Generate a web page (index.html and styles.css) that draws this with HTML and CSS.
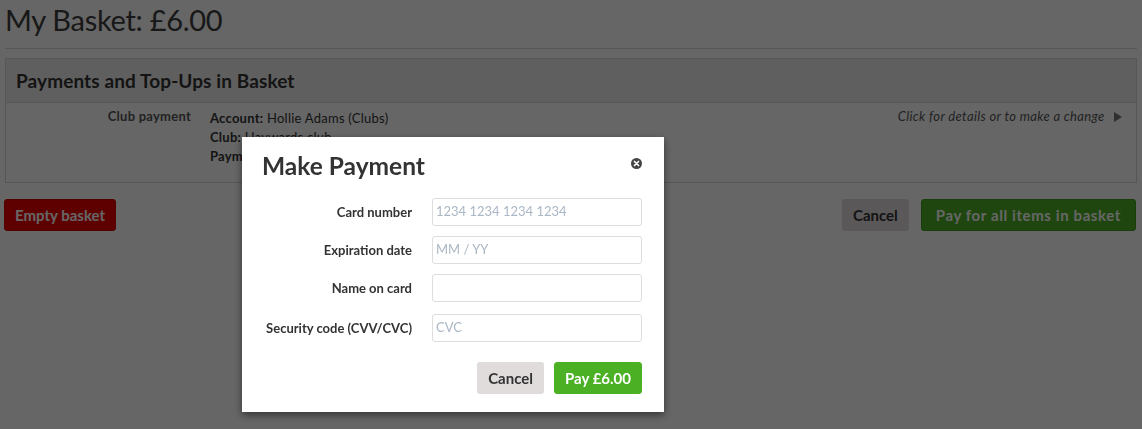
FILE: index.html
```html
<!DOCTYPE html>
<html>
<head>
<meta charset="utf-8">
<link rel="stylesheet" href="styles.css">
</head>
<body>
<div class="page">
  <h1 class="title">My Basket: £6.00</h1>
  <div class="rule"></div>
  <div class="panel">
    <div class="panel-head">Payments and Top-Ups in Basket</div>
    <div class="panel-body">
      <div class="item-label">Club payment</div>
      <div class="item-details">
        <div><b>Account:</b> Hollie Adams (Clubs)</div>
        <div><b>Club:</b> Haywards club</div>
        <div><b>Payment:</b> £6.00</div>
      </div>
      <div class="item-link">Click for details or to make a change <span class="tri"></span></div>
    </div>
  </div>
  <div class="actions">
    <button class="btn btn-red">Empty basket</button>
    <div class="actions-right">
      <button class="btn btn-grey">Cancel</button>
      <button class="btn btn-green btn-wide">Pay for all items in basket</button>
    </div>
  </div>
</div>
<div class="overlay"></div>
<div class="modal">
  <div class="modal-head">
    <h2 class="modal-title">Make Payment</h2>
    <span class="close"><svg width="11" height="11" viewBox="0 0 12 12"><circle cx="6" cy="6" r="6" fill="#444"/><path d="M3.8 3.8L8.2 8.2M8.2 3.8L3.8 8.2" stroke="#fff" stroke-width="1.8" stroke-linecap="round"/></svg></span>
  </div>
  <div class="form">
    <label class="lbl">Card number</label>
    <div class="field ph">1234 1234 1234 1234</div>
    <label class="lbl">Expiration date</label>
    <div class="field ph">MM / YY</div>
    <label class="lbl">Name on card</label>
    <div class="field"></div>
    <label class="lbl lbl-last">Security code (CVV/CVC)</label>
    <div class="field field-last ph">CVC</div>
  </div>
  <div class="modal-foot">
    <button class="btn btn-grey">Cancel</button>
    <button class="btn btn-green">Pay £6.00</button>
  </div>
</div>
</body>
</html>
```
FILE: styles.css
```css
html, body { margin: 0; padding: 0; }
body {
  font-family: Lato, "Open Sans", sans-serif;
  background: #fff;
  color: #444;
  width: 1142px;
  height: 429px;
  overflow: hidden;
}
.page { padding: 0 5px; }
.title {
  margin: 0;
  padding-top: 2px;
  font-size: 29px;
  font-weight: 400;
  line-height: 36px;
  color: #3c3c3c;
  letter-spacing: -0.3px;
}
.rule { height: 1px; background: #d8d8d8; margin-top: 10px; }
.panel {
  margin-top: 9px;
  border: 1px solid #d8d8d8;
}
.panel-head {
  background: #eee;
  border-bottom: 1px solid #ddd;
  height: 43px;
  line-height: 43px;
  padding-left: 10px;
  font-size: 19px;
  font-weight: 700;
  color: #333;
  letter-spacing: 0.1px;
}
.panel-body {
  display: flex;
  padding: 6px 14px 0 0;
  height: 73px;
  font-size: 13px;
  line-height: 19px;
  color: #333;
  letter-spacing: 0.25px;
}
.item-label {
  width: 185px;
  text-align: right;
  font-weight: 700;
  color: #555;
  margin-top: -2px;
}
.item-details { margin-left: 19px; flex: 1; }
.item-link {
  font-style: italic;
  color: #555;
  margin-top: -2px;
  letter-spacing: 0.35px;
}
.tri {
  display: inline-block;
  width: 0; height: 0;
  border-top: 5px solid transparent;
  border-bottom: 5px solid transparent;
  border-left: 8px solid #777;
  margin-left: 6px;
  vertical-align: -1px;
}
.actions {
  display: flex;
  justify-content: space-between;
  margin-top: 16px;
  margin-left: -1px;
}
.actions-right { display: flex; gap: 12px; margin-right: 1px; }
.btn {
  font-family: inherit;
  font-size: 15px;
  font-weight: 700;
  height: 32px;
  padding: 0 10px;
  border: 1px solid transparent;
  border-radius: 3px;
  cursor: pointer;
}
.btn-red { background: #e00; color: #fff; border-color: #c00; }
.btn-grey { background: #e0dcdc; color: #333; }
.btn-green { background: #4cb024; color: #fff; border-color: #3f9a1c; padding: 0 13px; }
.btn-wide { letter-spacing: 0.6px; padding: 0 14px; }
.overlay {
  position: fixed;
  inset: 0;
  background: rgba(0, 0, 0, 0.6);
}
.modal {
  position: fixed;
  left: 242px;
  top: 137px;
  width: 422px;
  height: 275px;
  box-sizing: border-box;
  background: #fff;
  box-shadow: 0 3px 8px rgba(0,0,0,0.5);
  padding: 0 22px 0 20px;
}
.modal-head {
  display: flex;
  justify-content: space-between;
  align-items: center;
  height: 56px;
}
.modal-title {
  margin: 0;
  font-size: 24.5px;
  font-weight: 700;
  color: #333;
}
.close { display: flex; margin-right: 0; margin-top: -4px; }
.form {
  display: grid;
  grid-template-columns: 150px 210px;
  column-gap: 20px;
  row-gap: 10px;
  margin-top: 5px;
}
.lbl {
  text-align: right;
  font-size: 13px;
  font-weight: 700;
  color: #333;
  line-height: 28px;
}
.lbl-last, .field-last { margin-top: 2px; }
.field {
  height: 28px;
  box-sizing: border-box;
  border: 1px solid #ddd;
  border-radius: 3px;
  padding: 0 0 0 3px;
  font-size: 13px;
  line-height: 24px;
}
.ph { color: #aab7c4; }
.modal-foot {
  display: flex;
  justify-content: flex-end;
  gap: 10px;
  margin-top: 20px;
}
.modal-foot .btn { height: 32px; }
.modal-foot .btn-green { padding: 0 10px; border-color: #4cb024; }
```
